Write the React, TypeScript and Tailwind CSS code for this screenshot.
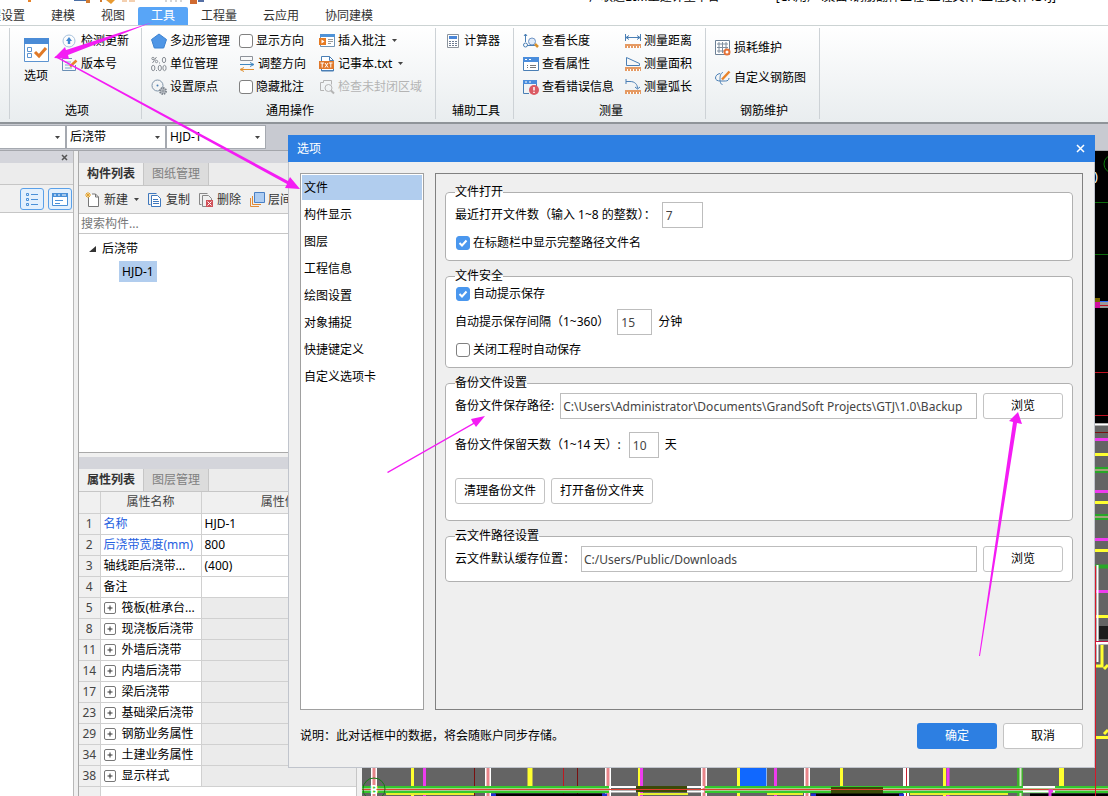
import { useState } from "react";
import type { ReactNode } from "react";
import clsx from "clsx";

const menuTabs = ["工程设置", "建模", "视图", "工具", "工程量", "云应用", "协同建模"];

const categories = [
  "文件",
  "构件显示",
  "图层",
  "工程信息",
  "绘图设置",
  "对象捕捉",
  "快捷键定义",
  "自定义选项卡",
];

type PropertyRow = {
  no: number;
  name: string;
  value?: string;
  link?: boolean;
  group?: boolean;
};

const properties: PropertyRow[] = [
  { no: 1, name: "名称", value: "HJD-1", link: true },
  { no: 2, name: "后浇带宽度(mm)", value: "800", link: true },
  { no: 3, name: "轴线距后浇带...", value: "(400)" },
  { no: 4, name: "备注", value: "" },
  { no: 5, name: "筏板(桩承台...", group: true },
  { no: 8, name: "现浇板后浇带", group: true },
  { no: 11, name: "外墙后浇带", group: true },
  { no: 14, name: "内墙后浇带", group: true },
  { no: 17, name: "梁后浇带", group: true },
  { no: 23, name: "基础梁后浇带", group: true },
  { no: 29, name: "钢筋业务属性", group: true },
  { no: 34, name: "土建业务属性", group: true },
  { no: 38, name: "显示样式", group: true },
];

/* ---------- icons ---------- */

function Icon({ children, size = 16 }: { children: ReactNode; size?: number }) {
  return (
    <svg
      width={size}
      height={size}
      viewBox="0 0 16 16"
      fill="none"
      stroke="#4a7fb5"
      className="shrink-0"
      aria-hidden="true"
    >
      {children}
    </svg>
  );
}

function Caret() {
  return (
    <svg width="5" height="3" viewBox="0 0 5 3" className="shrink-0" aria-hidden="true">
      <path d="M0 0h5L2.5 3z" fill="#444" />
    </svg>
  );
}

const ruler = (
  <>
    <path d="M0 11h16v4H0z" fill="#e59a63" stroke="none" />
    <path d="M2.5 13v2M5.5 13v2M8.5 13v2M11.5 13v2M14.5 13v2" stroke="#fff" />
  </>
);

const icons = {
  update: (
    <Icon>
      <circle cx="7" cy="8" r="6" stroke="#a9c3dd" />
      <path d="M7 4l3 4H8.200v3H5.800V8H4z" fill="#3f86d0" stroke="none" />
    </Icon>
  ),
  version: (
    <Icon>
      <path d="M13.5 9v5.5H.5v-12H10" stroke="#6a8fb5" />
      <path d="M3 6h6M3 9h4M3 12h7" stroke="#7ea6cf" />
      <path d="M8 10.500l6.500-6" stroke="#e8832a" strokeWidth="2.500" />
    </Icon>
  ),
  polygon: (
    <Icon>
      <path d="M8 1l7.500 5.500-2.800 8.500H3.300L.5 6.500z" fill="#4f96e6" stroke="#3d82d0" />
    </Icon>
  ),
  units: (
    <Icon>
      <g stroke="#8a8f96">
        <circle cx="2" cy="2.500" r="1.200" />
        <circle cx="5.500" cy="5.500" r="1.200" />
        <path d="M5.500 1l-4 6M8.500 6.500v1" />
        <ellipse cx="13" cy="4" rx="1.700" ry="2.700" />
        <ellipse cx="2.200" cy="12" rx="1.700" ry="2.700" />
        <path d="M5.500 14v1" />
        <ellipse cx="8.800" cy="12" rx="1.600" ry="2.700" />
        <ellipse cx="13.500" cy="12" rx="1.600" ry="2.700" />
      </g>
    </Icon>
  ),
  origin: (
    <Icon>
      <circle cx="6.500" cy="6.500" r="5.500" stroke="#7f93a8" />
      <circle cx="6.500" cy="6.500" r="1" fill="#4a7fb5" stroke="none" />
      <circle cx="12" cy="12" r="3" fill="#c4c9cf" stroke="#7f868f" strokeWidth="2" strokeDasharray="1.500 .8" />
      <circle cx="12" cy="12" r="1" fill="#fff" stroke="#7f868f" />
    </Icon>
  ),
  direction: (
    <Icon>
      <path d="M1.500.5h12v4h-12z" stroke="#8d9299" />
      <path d="M1 8.500h13M11 6.500l4 2-4 2" stroke="#3f86c0" />
      <path d="M15 13.500H2M5 11.500l-4 2 4 2" stroke="#e09030" />
    </Icon>
  ),
  annotate: (
    <Icon>
      <path d="M1.500 1.500h14v12h-14z" stroke="#7193b5" fill="#fff" />
      <path d="M1 1h15v3H1z" fill="#4f93d8" stroke="none" />
      <path d="M0 5h7v7H0z" fill="#e67a22" stroke="none" />
      <path d="M2.500 6.500l3 2-3 2z" fill="#fff" stroke="none" />
      <path d="M9 6.500h5M9 8.500h5M9 10.500h3" stroke="#9a9a9a" />
    </Icon>
  ),
  notepad: (
    <Icon>
      <path d="M2.500 15V.5h8l4 4V15z" fill="#fff" />
      <path d="M10.500.5v4h4" />
      <path d="M0 5h15v8H0z" fill="#e0792c" stroke="none" />
      <path d="M1.500 7h3.500M3.200 7v4.500M6 7l3 4.500M9 7l-3 4.500M10 7h3.500M11.800 7v4.500" stroke="#fff" />
      <path d="M2 14.500h13" />
    </Icon>
  ),
  region: (
    <Icon>
      <path d="M5 11.500H1.500v-8h3v-2h8v4" stroke="#b4b4b4" />
      <circle cx="9.500" cy="9" r="3.500" stroke="#b4b4b4" />
      <path d="M12 11.500l3 3" stroke="#b4b4b4" strokeWidth="2" />
    </Icon>
  ),
  calculator: (
    <Icon>
      <path d="M2.500 1.500h11v13h-11z" stroke="#8c949c" fill="#fff" />
      <path d="M4 3h8v3H4z" fill="#4a86d8" stroke="none" />
      <path d="M4 8.500h8M4 10.500h8M4 12.500h8" stroke="#6d7c92" strokeDasharray="2 1" />
    </Icon>
  ),
  length: (
    <Icon>
      <path d="M2.500 1v8M1 3l1.500-2L4 3" />
      <circle cx="2.500" cy="12" r="2" />
      <circle cx="9" cy="8.500" r="3.500" fill="#dfeaf8" stroke="#6d93c4" />
      <path d="M4 12.500h8" />
      <path d="M12 11l3 3" stroke="#d8902a" strokeWidth="2.500" />
    </Icon>
  ),
  attribute: (
    <Icon>
      <path d="M.5 1.500h15v13H.5z" fill="#fff" />
      <path d="M0 1h16v5H0z" fill="#4a8ddc" stroke="none" />
      <path d="M2 3.500h2M6 3.500h2" stroke="#fff" />
      <path d="M4 9.500h1M7 9.500h6M4 11.500h1M7 11.500h6" stroke="#777" />
    </Icon>
  ),
  errorInfo: (
    <Icon>
      <path d="M6 14.500H.5v-13h13V7" />
      <path d="M0 1h14v4H0z" fill="#4a8ddc" stroke="none" />
      <path d="M2 3h2M6 3h2" stroke="#fff" />
      <circle cx="11" cy="11" r="5" fill="#db5a63" stroke="none" />
      <path d="M11 8v3.500M11 12.800v1.200" stroke="#fff" strokeWidth="1.500" />
    </Icon>
  ),
  distance: (
    <Icon>
      <path d="M.5 1v7M15.500 1v7M1 4.500h14M4 2.500l-3 2 3 2M12 2.500l3 2-3 2" />
      {ruler}
    </Icon>
  ),
  area: (
    <Icon>
      <path d="M1.500 9.500v-8l13 6v2z" />
      {ruler}
    </Icon>
  ),
  arc: (
    <Icon>
      <path d="M1 0v5M1 2.500h4c5 0 7.500 3 7.500 7M10 8l2.500 2L15 8" />
      {ruler}
    </Icon>
  ),
  loss: (
    <Icon>
      <path d="M.5.5h14v14H.5z" stroke="#6d8196" fill="#fff" />
      <path d="M4 2v11M7.500 2v11M11 2v7M2 4h11M2 7.500h11M2 11h7" stroke="#7f8e9e" />
      <circle cx="12" cy="12" r="2.500" fill="#fff" stroke="#e57238" strokeWidth="2" />
    </Icon>
  ),
  rebar: (
    <Icon>
      <path d="M5 3.500C2 4 .5 6 .5 8s2 3 5 3h5c2 0 3.500-1 3.500-3M7.500 14.500c-2 0-2.500-3-2.500-6s1-6 3-6" />
      <path d="M7 9.500l7.500-8" stroke="#e8832a" strokeWidth="2.500" />
    </Icon>
  ),
  add: (
    <Icon>
      <path d="M3.500 5v9.500h10V5l-3-3H7" stroke="#777" fill="#fff" />
      <path d="M10.500 2v3h3" stroke="#777" />
      <path d="M3 0v6M0 3h6M1 1l4 4M5 1L1 5" stroke="#e5a32c" />
    </Icon>
  ),
  copy: (
    <Icon>
      <path d="M9.500 1.500h-8v11h2" stroke="#3f78bd" />
      <path d="M4.500 3.500h6l3 3v8h-9z" stroke="#3f78bd" fill="#fff" />
      <path d="M6 7.500h5M6 9.500h6M6 11.500h6" stroke="#3f78bd" />
    </Icon>
  ),
  remove: (
    <Icon>
      <path d="M9.500 1.500h-8v11h2" stroke="#888" />
      <path d="M8 14.500H4.500v-11h6l3 3V8" stroke="#888" />
      <path d="M8 8h7v7H8z" fill="#d05058" stroke="none" />
      <path d="M9.500 9.500l4 4M13.500 9.500l-4 4" stroke="#fff" />
    </Icon>
  ),
  layers: (
    <Icon>
      <path d="M1.500 6v8.500H10" stroke="#e08a35" />
      <path d="M3.500 4v8.500H12" stroke="#e08a35" />
      <path d="M5.500.5h10v10h-10z" fill="#aecdf2" stroke="#4a80c4" />
    </Icon>
  ),
};

/* ---------- small controls ---------- */

function ToolButton({
  icon,
  label,
  caret,
  disabled,
}: {
  icon: ReactNode;
  label: string;
  caret?: boolean;
  disabled?: boolean;
}) {
  return (
    <button
      disabled={disabled}
      className="flex h-[23px] items-center gap-[3px] whitespace-nowrap disabled:text-[#b4b4b4]"
    >
      {icon}
      {label}
      {caret && (
        <span className="pl-[3px]">
          <Caret />
        </span>
      )}
    </button>
  );
}

function CheckBox({ label, checked = false }: { label: string; checked?: boolean }) {
  return (
    <label className="flex items-center gap-[3px] whitespace-nowrap">
      <span className="grid">
        <input
          type="checkbox"
          defaultChecked={checked}
          className="peer size-[14px] appearance-none rounded-[3px] border border-[#808080] bg-white [grid-area:1/1] checked:border-[#4a97ee] checked:bg-[#4a97ee]"
        />
        <svg
          viewBox="0 0 14 14"
          className="pointer-events-none invisible size-[14px] [grid-area:1/1] peer-checked:visible"
          aria-hidden="true"
        >
          <path d="M3.500 7l2.500 2.500L10.500 4.500" fill="none" stroke="#fff" strokeWidth="2" />
        </svg>
      </span>
      {label}
    </label>
  );
}

function RibbonGroup({ title, className, children }: { title: string; className: string; children: ReactNode }) {
  return (
    <section className={clsx("flex shrink-0 flex-col border-r border-[#cdd2d6] text-black", className)}>
      <div className="flex h-[71px] shrink-0 pt-px">{children}</div>
      <h2 className="mt-[4px] pl-[3px] text-center leading-4">{title}</h2>
    </section>
  );
}

function ComboBox({ label, options }: { label: string; options: string[] }) {
  return (
    <div className="grid w-[100px] items-center">
      <select
        aria-label={label}
        className="h-6 w-full appearance-none border border-[#a5a9b0] bg-white pl-[3px] [grid-area:1/1]"
      >
        {options.map((o) => (
          <option key={o}>{o}</option>
        ))}
      </select>
      <span className="pointer-events-none mr-[6px] justify-self-end [grid-area:1/1]">
        <Caret />
      </span>
    </div>
  );
}

function PanelTabs({ tabs }: { tabs: string[] }) {
  const [active, setActive] = useState(tabs[0]);

  return (
    <div className="flex h-[23px] shrink-0 border-b border-[#c6c6c6] bg-[#ececec]">
      {tabs.map((tab) => (
        <button
          key={tab}
          onClick={() => setActive(tab)}
          className={clsx(
            "border-r border-[#c6c6c6] px-2",
            tab === active ? "bg-[#f0f0f0] font-bold text-[#333]" : "bg-[#dcdcdc] text-[#808080]",
          )}
        >
          {tab}
        </button>
      ))}
    </div>
  );
}

function Group({ title, children }: { title: string; children: ReactNode }) {
  return (
    <fieldset className="min-w-0 rounded border border-[#b0b0b0] bg-white pr-[9px] pb-[9px] pl-[9px]">
      <legend className="leading-4">{title}</legend>
      <div className="flex flex-col pt-[2px]">{children}</div>
    </fieldset>
  );
}

function PushButton({ children, className, onClick }: { children: ReactNode; className?: string; onClick?: () => void }) {
  return (
    <button
      onClick={onClick}
      className={clsx("h-[26px] shrink-0 rounded-[3px] border border-[#c3c3c3] bg-white text-black", className)}
    >
      {children}
    </button>
  );
}

const fieldClass = "h-[26px] border border-[#bdbdbd] bg-white text-[#444]";

/* ---------- page parts ---------- */

function Ribbon() {
  return (
    <header className="shrink-0 bg-white">
      <div className="flex h-[7px] justify-between overflow-hidden">
        <svg width="210" height="7" aria-hidden="true">
          <path d="M28 0h3v2h-3z" fill="#e8832a" />
          <path d="M74 0h15v1H74z" fill="#4a6fa5" />
          <path d="M86 0h4v3h-4zM100 0h2v2h-2z" fill="#d07a30" />
          <path d="M106 0h9l-4 4z" fill="#e89a30" />
          <path d="M122 1h5M129 1h6" stroke="#e8a060" />
          <path d="M166 0v2M171 0v2M176 0v2M181 0v2" stroke="#aaa" />
          <path d="M190 0h7v4h-7z" fill="#d06a30" />
          <path d="M198 0h6v2h-6z" fill="#556fa5" />
        </svg>
        <h1 className="-mt-[10px] mr-[52px] h-4 whitespace-pre leading-[14px] text-black">
          {"广联达BIM土建计量平台                  [C:\\用户\\桌面\\钢筋翻样工程\\工程文件\\工程文件\\GTJ]"}
        </h1>
      </div>
      <nav className="-ml-[36px] flex h-[19px] border-b border-[#ccd3d3] text-[#333]">
        {menuTabs.map((tab) => (
          <button
            key={tab}
            className={clsx("h-[18px] px-[13px] leading-[18px]", tab === "工具" && "rounded-t-[2px] bg-[#58a5f7] text-white")}
          >
            {tab}
          </button>
        ))}
      </nav>
      <div className="flex h-[98px] overflow-hidden border-b-2 border-[#8f9499] bg-linear-to-b from-white to-[#e9edef] pt-[2px] pb-[3px]">
        <div className="w-[10px] shrink-0 border-r border-[#cdd2d6]" />
        <RibbonGroup title="选项" className="w-[132px]">
          <button className="flex w-[52px] flex-col items-center gap-[6px] pt-[9px]">
            <svg width="25" height="24" viewBox="0 0 25 24" fill="none" className="shrink-0" aria-hidden="true">
              <path d="M.5.5h24v23H.5z" fill="#fff" stroke="#5d94d0" />
              <path d="M0 0h25v6H0z" fill="#4a8bd6" />
              <path d="M3.500 9.500h4v4h-4zM3.500 15.500h4v4h-4z" stroke="#5d94d0" />
              <path d="M11 14l4 4 7-8" stroke="#e07a28" strokeWidth="3" />
            </svg>
            选项
          </button>
          <div>
            <ToolButton icon={icons.update} label="检测更新" />
            <ToolButton icon={icons.version} label="版本号" />
          </div>
        </RibbonGroup>
        <RibbonGroup title="通用操作" className="w-[294px]">
          <div className="w-[97px] pl-[9px]">
            <ToolButton icon={icons.polygon} label="多边形管理" />
            <ToolButton icon={icons.units} label="单位管理" />
            <ToolButton icon={icons.origin} label="设置原点" />
          </div>
          <div className="w-[80px]">
            <div className="flex h-[23px] items-center">
              <CheckBox label="显示方向" />
            </div>
            <ToolButton icon={icons.direction} label="调整方向" />
            <div className="flex h-[23px] items-center">
              <CheckBox label="隐藏批注" />
            </div>
          </div>
          <div>
            <ToolButton icon={icons.annotate} label="插入批注" caret />
            <ToolButton icon={icons.notepad} label="记事本.txt" caret />
            <ToolButton icon={icons.region} label="检查未封闭区域" disabled />
          </div>
        </RibbonGroup>
        <RibbonGroup title="辅助工具" className="w-[78px]">
          <div className="pl-[9px]">
            <ToolButton icon={icons.calculator} label="计算器" />
          </div>
        </RibbonGroup>
        <RibbonGroup title="测量" className="w-[192px]">
          <div className="w-[111px] pl-[9px]">
            <ToolButton icon={icons.length} label="查看长度" />
            <ToolButton icon={icons.attribute} label="查看属性" />
            <ToolButton icon={icons.errorInfo} label="查看错误信息" />
          </div>
          <div>
            <ToolButton icon={icons.distance} label="测量距离" />
            <ToolButton icon={icons.area} label="测量面积" />
            <ToolButton icon={icons.arc} label="测量弧长" />
          </div>
        </RibbonGroup>
        <RibbonGroup title="钢筋维护" className="w-[114px]">
          <div className="flex flex-col gap-[7px] pt-[7px] pl-[9px]">
            <ToolButton icon={icons.loss} label="损耗维护" />
            <ToolButton icon={icons.rebar} label="自定义钢筋图" />
          </div>
        </RibbonGroup>
      </div>
    </header>
  );
}

function NavigationPane() {
  return (
    <aside className="flex w-[74px] shrink-0 flex-col border-r border-[#b8b8b8] bg-white">
      <div className="flex h-[12px] items-center justify-end bg-[#d4d5db] pr-[5px]">
        <button aria-label="关闭">
          <svg width="7" height="7" viewBox="0 0 7 7" className="block" aria-hidden="true">
            <path d="M1 1l5 5M6 1L1 6" stroke="#555" strokeWidth="1.500" />
          </svg>
        </button>
      </div>
      <div className="h-[22px] border-b border-[#c6c6c6] bg-[#ececec]" />
      <div className="flex h-[28px] items-center justify-end gap-1 border-b border-[#c6c6c6] bg-[#f0f0f0] pr-px">
        <button aria-label="列表" className="flex h-[22px] w-6 items-center justify-center rounded-[3px] border border-[#5aa0e8] bg-[#e3f0fd]">
          <Icon>
            <path d="M2.500 2.500h2v2h-2zM2.500 7.500h2v2h-2zM2.500 12.500h2v2h-2zM7 3.500h7M7 8.500h7M7 13.500h7" stroke="#4a90d8" />
          </Icon>
        </button>
        <button aria-label="卡片" className="flex h-[22px] w-6 items-center justify-center rounded-[3px] border border-[#5aa0e8] bg-[#e3f0fd]">
          <Icon>
            <path d="M.5 2.500h15v12H.5z" fill="#fff" stroke="#4a90d8" />
            <path d="M0 2h16v4H0z" fill="#4a90d8" stroke="none" />
            <path d="M2 4h2M6 4h2M10 4h4" stroke="#fff" />
            <path d="M3 9.500h8M3 12.500h5" stroke="#4a90d8" />
          </Icon>
        </button>
      </div>
    </aside>
  );
}

function ComponentPane() {
  return (
    <div className="flex w-[278px] shrink-0 flex-col border-l border-[#a9a9a9]">
      <section className="border-b border-[#a9a9a9] bg-white">
        <div className="h-[12px] bg-[#d4d5db]" />
        <PanelTabs tabs={["构件列表", "图纸管理"]} />
        <div className="flex h-[28px] items-center gap-2 overflow-hidden border-b border-[#c6c6c6] bg-[#f0f0f0] pl-[6px] text-[#333]">
          <ToolButton icon={icons.add} label="新建" caret />
          <ToolButton icon={icons.copy} label="复制" />
          <ToolButton icon={icons.remove} label="删除" />
          <ToolButton icon={icons.layers} label="层间" />
        </div>
        <input
          aria-label="搜索构件"
          placeholder="搜索构件..."
          className="block h-[20px] w-full border-b border-[#c6c6c6] bg-white px-[2px] placeholder:text-[#777]"
        />
        <ul className="h-[218px] pt-[3px] text-black">
          <li>
            <span className="flex h-6 items-center gap-[6px] pl-[10px]">
              <svg width="7" height="6" viewBox="0 0 7 6" aria-hidden="true">
                <path d="M7 0v6H0z" fill="#333" />
              </svg>
              后浇带
            </span>
            <ul className="pl-[40px]">
              <li>
                <button className="h-[21px] bg-[#b1cdee] px-[3px]">HJD-1</button>
              </li>
            </ul>
          </li>
        </ul>
      </section>
      <section className="mt-[4px] flex flex-1 flex-col bg-white">
        <div className="h-[12px] shrink-0 bg-[#d4d5db]" />
        <PanelTabs tabs={["属性列表", "图层管理"]} />
        <table className="w-full table-fixed border-collapse text-black">
          <colgroup>
            <col className="w-[21px]" />
            <col className="w-[101px]" />
            <col />
          </colgroup>
          <thead>
            <tr className="h-[21px] border-b border-[#d0d0d0] bg-[#f0f0f0] text-[#444]">
              <th className="border-r border-[#d0d0d0] p-0" />
              <th className="border-r border-[#d0d0d0] p-0 font-normal">属性名称</th>
              <th className="p-0 font-normal">属性值</th>
            </tr>
          </thead>
          <tbody>
            {properties.map((row) => (
              <tr key={row.no} className="h-[21px] border-b border-[#d0d0d0]">
                <td className="border-r border-[#d0d0d0] bg-[#f0f0f0] p-0 text-center text-[#444]">{row.no}</td>
                <td className="border-r border-[#d0d0d0] p-0 pl-[3px]">
                  <div className={clsx("flex items-center gap-[6px] whitespace-nowrap", row.link && "text-[#2560e0]")}>
                    {row.group && (
                      <button aria-label={`展开${row.name}`}>
                        <svg width="12" height="12" viewBox="0 0 12 12" className="block" aria-hidden="true">
                          <rect x=".5" y=".5" width="11" height="11" rx="1.500" fill="#fff" stroke="#777" />
                          <path d="M3.500 6h5M6 3.500v5" stroke="#333" />
                        </svg>
                      </button>
                    )}
                    {row.name}
                  </div>
                </td>
                <td className={clsx("p-0 pl-[3px]", row.group && "bg-[#ebebeb]")}>{row.value}</td>
              </tr>
            ))}
          </tbody>
        </table>
        <div className="w-[22px] flex-1 border-r border-[#d0d0d0] bg-[#f0f0f0]" />
      </section>
    </div>
  );
}

// Plan view of the building: axes, walls and beams
function DrawingCanvas() {
  return (
    <main className="min-w-0 flex-1 overflow-hidden bg-[#646464]">
      <svg width="746" height="645" viewBox="362 151 746 645" fill="none" className="block" aria-label="绘图区">
        <path d="M362 151h746v272H362z" fill="#000" />
        <circle cx="1113" cy="164" r="9" stroke="#0a7a0a" />
        <text x="1094" y="181" fill="#fff" fontSize="13">)</text>
        <path d="M1095 202.500h13M1095 254.500h13" stroke="#0c6a0c" />
        <path d="M1095 298h5v4h-5z" fill="#7a6a00" />
        <path d="M1100 301h8v7h-8z" fill="#999" />
        <path d="M1100 301.500h8" stroke="#2b6bff" />
        <path d="M1095 302h5v6h-5z" fill="#d010a0" />
        <path d="M1100 305.500h8M1095 372.500h13M1095 415.500h13" stroke="#c01020" />
        <path d="M1095 424.500h13" stroke="#fff" strokeWidth="2" />
        <path d="M1095 432.500h13" stroke="#7a1010" />
        <g strokeWidth="3">
          <path d="M1095 439.500h13M1095 491.500h13M1095 539.500h13M1095 591.500h13" stroke="#ee3cee" />
          <path d="M1095 454.500h13M1095 502.500h13M1095 550.500h13M1095 616.500h13" stroke="#ffff30" />
        </g>
        <path d="M1095 470h13M1095 517h13" stroke="#28a828" strokeWidth="6" />
        <path d="M1095 470h13M1095 517h13" stroke="#a3a37c" strokeWidth="2" />
        <path d="M1095 566.500h13" stroke="#28a828" strokeWidth="4" />
        <path d="M1097.500 565v97" stroke="#fff" strokeWidth="2" />
        <path d="M1099 626h9v13h-9z" fill="#1c1c1c" />
        <path d="M1095 643h13" stroke="#fff" strokeWidth="3" />
        <path d="M1095 641.500h13" stroke="#c01040" />
        <path d="M1102 645v21h-7M1104 669l4-4M1095 737.500h13M1104 734l4-4" stroke="#ffff30" strokeWidth="3" />

        <path d="M740 768h26v20h-26z" fill="#1068ff" />
        <path d="M766.500 768v20" stroke="#8ab4f0" />
        <path d="M474.500 768v28M577.500 768v28" stroke="#7a1010" />
        <path d="M563.500 768v28" stroke="#c01820" />
        <path d="M374 768v28M488 768v28M608 768v28M704 768v28M807 768v28M906 768v28" stroke="#fff" strokeWidth="6" />
        <path d="M374 768v28M488 768v28M608 768v28M704 768v28M807 768v28" stroke="#e8858a" strokeWidth="3" />
        <path d="M906.500 768v28" stroke="#c82030" />
        <path d="M1020 768v28" stroke="#3fae2c" strokeWidth="6" />
        <path d="M1020.500 768v28" stroke="#d8e8c8" strokeWidth="2" />
        <path d="M412.500 768v28M639.500 768v28M738.500 768v28M841.500 768v22M944.500 768v28" stroke="#ffff30" strokeWidth="3" />
        <path d="M530 768v21M1061.500 768v22" stroke="#ffff30" strokeWidth="5" />
        <path d="M424.500 768v28M641.500 768v28M775.500 768v28M948 768v28" stroke="#ee3cee" strokeWidth="3" />
        <path d="M362 787h247M362 792h247M705 787h403M705 792h403" stroke="#34c82c" strokeWidth="2" />
        <path d="M362 789.500h247M705 789.500h403" stroke="#a8c890" strokeWidth="3" />
        <path d="M831 787h52v8h-52zM636 786h51v6h-51z" fill="#3c4a08" />
        <path d="M609 787h27M609 791.500h27M687 787h17M687 791.500h17M1023 787h32M1023 791.500h32" stroke="#fff" strokeWidth="2" />
        <path d="M386 794h88M640 794h48M767 794h36M910 794h98" stroke="#e8f030" strokeWidth="2" />
        <path d="M495 795h107M811 795h92M1030 795h78" stroke="#000" strokeWidth="3" />
        <path d="M491 795h5M602 795h5M811 795h5M899 795h5" stroke="#2030d0" strokeWidth="3" />
        <path d="M362 789.500h746" stroke="#e04030" />
        <path d="M1050 796v-5h3" stroke="#ee3cee" strokeWidth="3" />
        <circle cx="374" cy="789" r="11" stroke="#157a15" />
        <text x="370" y="794" fill="#fff" fontSize="12" fontWeight="bold">B</text>
        <path d="M1095.500 566v230" stroke="#d81828" />
      </svg>
    </main>
  );
}

function OptionsDialog() {
  const [category, setCategory] = useState(categories[0]);

  return (
    <div
      role="dialog"
      aria-labelledby="dialog-title"
      className="absolute top-[135px] right-[13px] bottom-[28px] left-[288px] flex flex-col border border-t-0 border-[#c0c4cc] bg-[#efefef] text-black"
    >
      <div className="-mx-px flex h-[27px] shrink-0 items-center justify-between bg-[#2d7fe2] px-[9px] text-white">
        <h2 id="dialog-title">选项</h2>
        <button aria-label="关闭" className="p-px">
          <svg width="9" height="9" viewBox="0 0 9 9" aria-hidden="true">
            <path d="M1 1l7 7M8 1L1 8" stroke="#fff" strokeWidth="1.500" />
          </svg>
        </button>
      </div>
      <div className="flex min-h-0 flex-1 gap-[11px] px-[11px] pt-[11px]">
        <ul className="w-[124px] shrink-0 border border-[#a0a0a0] bg-white p-px">
          {categories.map((c) => (
            <li key={c}>
              <button
                onClick={() => setCategory(c)}
                className={clsx("mb-[2px] block h-[25px] w-full px-[2px] text-left", c === category && "bg-[#b1cdee]")}
              >
                {c}
              </button>
            </li>
          ))}
        </ul>
        <div className="flex min-w-0 flex-1 flex-col gap-[7px] border border-[#808080] px-[9px] pt-[10px]">
          <Group title="文件打开">
            <label className="flex items-center gap-[6px]">
              最近打开文件数（输入 1~8 的整数）：
              <input defaultValue="7" className={clsx(fieldClass, "w-[41px] px-[3px]")} />
            </label>
            <div className="mt-[7px] pl-px">
              <CheckBox label="在标题栏中显示完整路径文件名" checked />
            </div>
          </Group>
          <Group title="文件安全">
            <div className="pl-px">
              <CheckBox label="自动提示保存" checked />
            </div>
            <div className="mt-[7px] mb-[7px] flex items-center gap-[6px]">
              <label className="flex items-center gap-[8px]">
                自动提示保存间隔（1~360）
                <input defaultValue="15" className={clsx(fieldClass, "w-[35px] px-[3px]")} />
              </label>
              分钟
            </div>
            <div className="pl-px">
              <CheckBox label="关闭工程时自动保存" />
            </div>
          </Group>
          <Group title="备份文件设置">
            <div className="flex items-center gap-[6px]">
              <label htmlFor="backup-path" className="shrink-0">
                备份文件保存路径:
              </label>
              <input
                id="backup-path"
                defaultValue="C:\Users\Administrator\Documents\GrandSoft Projects\GTJ\1.0\Backup"
                className={clsx(fieldClass, "min-w-0 flex-1 px-[2px]")}
              />
              <PushButton className="w-[80px]">浏览</PushButton>
            </div>
            <div className="mt-[13px] flex items-center gap-[6px]">
              <label className="flex items-center gap-[8px]">
                备份文件保留天数（1~14 天）:
                <input defaultValue="10" className={clsx(fieldClass, "w-[30px] px-[3px]")} />
              </label>
              天
            </div>
            <div className="mt-[20px] mb-[7px] flex gap-[6px]">
              <PushButton className="px-2">清理备份文件</PushButton>
              <PushButton className="px-2">打开备份文件夹</PushButton>
            </div>
          </Group>
          <Group title="云文件路径设置">
            <div className="flex items-center gap-[6px]">
              <label htmlFor="cloud-path" className="shrink-0">
                云文件默认缓存位置：
              </label>
              <input
                id="cloud-path"
                defaultValue="C:/Users/Public/Downloads"
                className={clsx(fieldClass, "min-w-0 flex-1 px-[2px]")}
              />
              <PushButton className="w-[80px]">浏览</PushButton>
            </div>
          </Group>
        </div>
      </div>
      <div className="flex h-[57px] shrink-0 items-center gap-[6px] px-[11px] pb-[5px]">
        <p className="flex-1">说明：此对话框中的数据，将会随账户同步存储。</p>
        <button className="h-[26px] w-[80px] rounded-[3px] bg-[#2d7fe2] text-white">确定</button>
        <PushButton className="w-[80px]">取消</PushButton>
      </div>
    </div>
  );
}

// Hand-placed markup arrows pointing at the relevant controls
function Annotations() {
  return (
    <svg
      width="1108"
      height="796"
      className="pointer-events-none absolute top-0 left-0"
      fill="#f41cf4"
      aria-hidden="true"
    >
      <path d="M153 22L66 50l-1-3L54 58l15 1-1-4z" />
      <path d="M55 57l232 127-2 4 15 1-10-12-2 4L56 56z" />
      <path d="M387 472l86-49-2-4 14-3-9 11-2-3-86 49z" />
      <path d="M979 656l34-234-4-1 9-9 4 12-5-1-37 233z" />
    </svg>
  );
}

export default function App() {
  return (
    <div className="relative flex h-screen flex-col overflow-hidden bg-[#f0f0f0] font-['Noto_Sans','Noto_Sans_CJK_SC',sans-serif] text-[12px] leading-4">
      <Ribbon />
      <div className="-ml-[34px] flex h-[27px] shrink-0 items-center border-b border-[#a4a6ab] bg-[#c8cad1]">
        <ComboBox label="楼层" options={[""]} />
        <ComboBox label="构件类型" options={["后浇带"]} />
        <ComboBox label="构件" options={["HJD-1"]} />
      </div>
      <div className="flex min-h-0 flex-1">
        <NavigationPane />
        <div className="w-1 shrink-0" />
        <ComponentPane />
        <div className="w-[6px] shrink-0 border-l border-[#c6c6c6]" />
        <DrawingCanvas />
      </div>
      <OptionsDialog />
      <Annotations />
    </div>
  );
}
